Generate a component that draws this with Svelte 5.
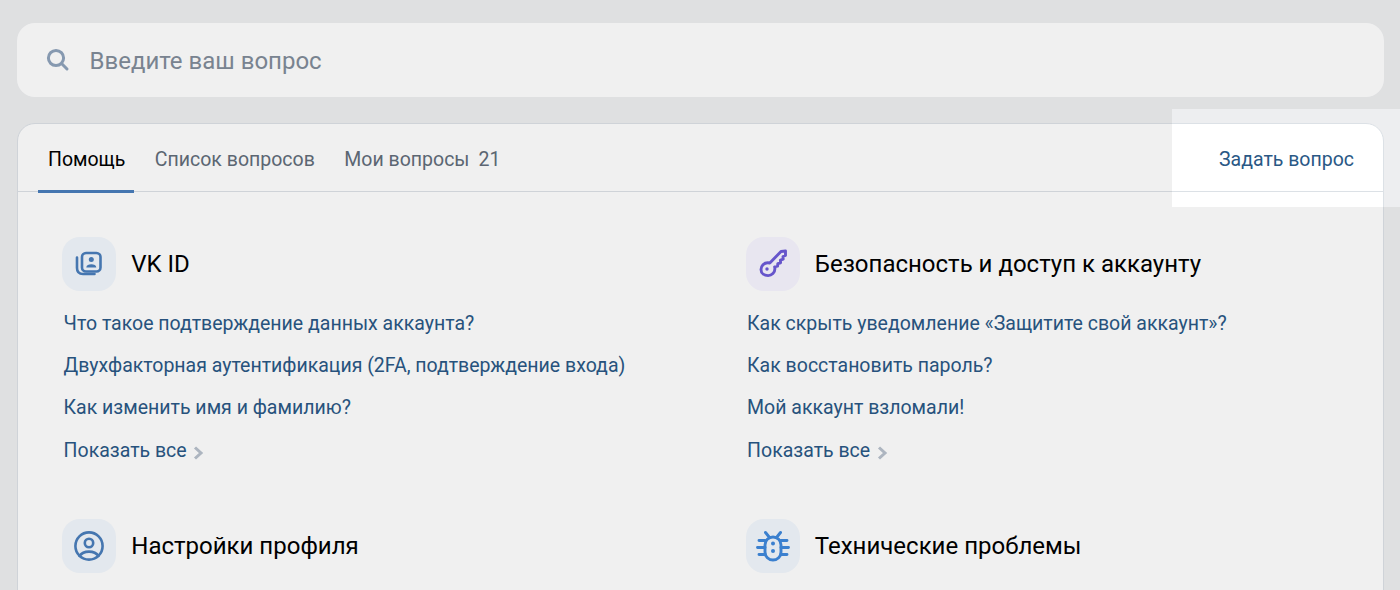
<script>
  // Help page: search box, tabbed card with two columns of topics.
  const tabs = [
    { label: "Помощь", active: true },
    { label: "Список вопросов" },
    { label: "Мои вопросы", count: 21 },
  ];

  const sections = [
    {
      title: "VK ID",
      icon: "id",
      tone: "blue",
      links: [
        "Что такое подтверждение данных аккаунта?",
        "Двухфакторная аутентификация (2FA, подтверждение входа)",
        "Как изменить имя и фамилию?",
      ],
    },
    {
      title: "Безопасность и доступ к аккаунту",
      icon: "key",
      tone: "violet",
      links: [
        "Как скрыть уведомление «Защитите свой аккаунт»?",
        "Как восстановить пароль?",
        "Мой аккаунт взломали!",
      ],
    },
    { title: "Настройки профиля", icon: "user", tone: "blue", links: [] },
    { title: "Технические проблемы", icon: "bug", tone: "sky", links: [] },
  ];
</script>

<div class="page">
  <label class="search">
    <svg class="search-icon" width="24" height="24" viewBox="0 0 24 24" fill="none" aria-hidden="true">
      <circle cx="10" cy="10" r="7.6" />
      <path d="M15.8 15.8 21 21" />
    </svg>
    <input type="text" placeholder="Введите ваш вопрос" />
  </label>

  <section class="card">
    <nav class="tabs">
      {#each tabs as tab}
        <button class="tab" class:active={tab.active} type="button">
          {tab.label}{#if tab.count}<span class="count">{tab.count}</span>{/if}
        </button>
      {/each}
      <button class="ask" type="button">Задать вопрос</button>
    </nav>

    <div class="topics">
      {#each sections as section}
        <article class="topic">
          <header class="topic-head">
            <span class="badge {section.tone}">
              <svg width="54" height="54" viewBox="0 0 54 54" fill="none" aria-hidden="true">
                {#if section.icon === "id"}
                  <rect x="20" y="16" width="18.5" height="18.5" rx="4" />
                  <path d="M15 20.5V31c0 4 2 6 6 6h11.500" />
                  <circle class="solid" cx="29.3" cy="22.5" r="2.5" />
                  <path class="solid" d="M24.3 30.500c0-2.300 2.300-3.300 5-3.300s5 1 5 3.300z" />
                {:else if section.icon === "key"}
                  <path class="thick" d="M15 32.500c0-3.700 3-6.800 6.800-6.800.7 0 1.400.1 2 .3L35 14.500l4.500-.5v4.500l-2.500 1 .2 2.700-2.800.9.200 2.700-2.800.8-.2 2.600-3 .6c.2.600.3 1.300.3 2 0 3.700-3 6.800-6.800 6.800S15 36.200 15 32.500z" />
                  <circle class="solid" cx="21" cy="32" r="1.700" />
                {:else if section.icon === "user"}
                  <circle cx="27" cy="27" r="13.600" />
                  <circle cx="27" cy="24" r="4.200" />
                  <path d="M17.500 37c2-3 5.500-4.400 9.500-4.400s7.500 1.400 9.500 4.400" />
                {:else}
                  <rect class="thick" x="19" y="18" width="16" height="23" rx="8" />
                  <path class="thick" d="M19.500 13.500l4 5M34.500 13.500l-4 5M13 21.500h6M35 21.500h6M11.500 28.500H19M35 28.500h7.500M13 35.500h6M35 35.500h6" />
                  <circle class="solid" cx="27" cy="24.500" r="2" />
                  <circle class="solid" cx="27" cy="32" r="2" />
                {/if}
              </svg>
            </span>
            <h2>{section.title}</h2>
          </header>

          {#if section.links.length}
            <ul>
              {#each section.links as link}
                <li><a href="#top">{link}</a></li>
              {/each}
              <li>
                <a class="more" href="#top">
                  Показать все
                  <svg width="11" height="14" viewBox="0 0 11 14" fill="none" aria-hidden="true">
                    <path d="M2 1.500 8 7l-6 5.500" />
                  </svg>
                </a>
              </li>
            </ul>
          {/if}
        </article>
      {/each}
    </div>
  </section>

  <!-- Tour spotlight: the box-shadow dims everything but this rectangle. -->
  <div class="spotlight"></div>
</div>

<style>
  :global(html),
  :global(body) {
    margin: 0;
    height: 590px;
    overflow: hidden;
  }
  .page {
    position: relative;
    height: 590px;
    overflow: hidden;
    box-sizing: border-box;
    padding: 23px 16px 0 17px;
    background: #edeef0;
    font-family: Roboto, "Noto Sans", sans-serif;
    color: #000;
  }
  .search {
    display: flex;
    align-items: center;
    gap: 19.5px;
    height: 74px;
    padding: 0 30px 0 29px;
    background: #fff;
    border-radius: 18px;
  }
  .search-icon {
    flex: none;
    stroke: #8fa3bc;
    stroke-width: 3;
    stroke-linecap: round;
  }
  .search input {
    flex: 1;
    border: 0;
    outline: 0;
    padding: 2px 0 0;
    background: transparent;
    font: inherit;
    font-size: 24px;
  }
  .search input::placeholder {
    color: #818c99;
    opacity: 1;
  }
  .card {
    margin-top: 26px;
    min-height: 640px;
    background: #fff;
    border: 1px solid #dce1e6;
    border-radius: 18px;
  }
  .tabs {
    display: flex;
    align-items: stretch;
    height: 67px;
    padding: 0 29px 0 20px;
    border-bottom: 1px solid #dce1e6;
  }
  .tab,
  .ask {
    appearance: none;
    background: transparent;
    border: 0;
    padding: 3px 0 0;
    font: inherit;
    font-size: 19.5px;
    cursor: pointer;
  }
  .tab {
    position: relative;
    padding: 3px 9px 0 10px;
    margin-right: 10.5px;
    color: #626d7a;
  }
  .tab.active {
    color: #000;
  }
  .tab.active::after {
    content: "";
    position: absolute;
    left: 0;
    right: 0;
    bottom: -2px;
    height: 3px;
    background: #4a7ebb;
  }
  .count {
    margin-left: 9px;
  }
  .ask {
    margin-left: auto;
    color: #2a5885;
  }
  .topics {
    display: grid;
    grid-template-columns: 683.5px 1fr;
    row-gap: 41px;
    padding: 45px 44px 0;
  }
  .topic-head {
    display: flex;
    align-items: center;
    gap: 15.3px;
  }
  .badge {
    flex: none;
    width: 54px;
    height: 54px;
    border-radius: 18px;
  }
  .badge svg {
    display: block;
    stroke-width: 2.6;
    stroke-linecap: round;
    stroke-linejoin: round;
  }
  .badge .thick {
    stroke-width: 2.9;
  }
  .badge .solid {
    fill: currentColor;
    stroke: none;
  }
  .badge.blue {
    background: #f2f7fd;
    color: #4a7ebb;
    stroke: #4a7ebb;
  }
  .badge.violet {
    background: #f7f5ff;
    color: #6d5bd8;
    stroke: #6d5bd8;
  }
  .badge.sky {
    background: #f2f7fd;
    color: #3f88dc;
    stroke: #3f88dc;
  }
  h2 {
    margin: 0;
    font-size: 24px;
    font-weight: 400;
    line-height: 30px;
  }
  ul {
    list-style: none;
    margin: 18px 0 0;
    padding: 0 0 0 1.6px;
  }
  li {
    height: 42.2px;
    line-height: 29px;
    font-size: 19.5px;
  }
  a {
    color: #2a5885;
    text-decoration: none;
  }
  .more {
    display: inline-flex;
    align-items: center;
    gap: 6.5px;
  }
  .more svg {
    margin-top: 6px;
    stroke: #b8c1cc;
    stroke-width: 3;
  }
  .spotlight {
    position: absolute;
    left: 1172px;
    top: 109px;
    width: 228px;
    height: 98px;
    pointer-events: none;
    box-shadow: 0 0 0 1600px rgba(0, 0, 0, 0.06);
  }
</style>
